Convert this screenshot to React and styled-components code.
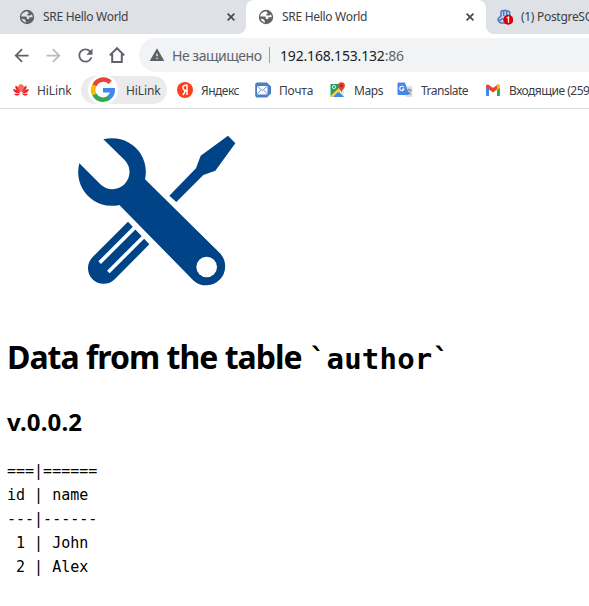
import React from "react";
import styled, { createGlobalStyle } from "styled-components";
import { MdArrowBack, MdArrowForward, MdRefresh, MdWarning } from "react-icons/md";

const Global = createGlobalStyle`
  html, body { margin: 0; padding: 0; background: #fff; overflow: hidden; }
  * { box-sizing: border-box; }
`;

const Window = styled.div`
  width: 589px;
  height: 606px;
  overflow: hidden;
  background: #fff;
  font-family: "Noto Sans", "Open Sans", sans-serif;
  font-size: 12px;
  color: #3c4043;
`;

const TabStrip = styled.div`
  display: flex;
  height: 34px;
  background: linear-gradient(#dee1e6 0 17px, #fff 17px);
`;

const Tab = styled.div`
  flex: none;
  display: flex;
  align-items: center;
  width: ${(p) => p.$width}px;
  padding-left: ${(p) => p.$inset}px;
  background: ${(p) => (p.$active ? "#fff" : "#dee1e6")};
  border-radius: ${(p) => p.$radius};
  overflow: hidden;
`;

const TabTitle = styled.span`
  flex: 1;
  margin-left: 8px;
  white-space: nowrap;
  line-height: 16px;
  letter-spacing: ${(p) => p.$spacing || 0}px;
`;

const CloseIcon = styled.svg`
  flex: none;
  width: 8px;
  height: 8px;
  margin-right: ${(p) => p.$end}px;
`;

const Toolbar = styled.div`
  display: flex;
  align-items: center;
  height: 42px;
  padding-left: 10px;
  color: #5f6368;
`;

const NavButton = styled.span`
  display: flex;
  align-items: center;
  justify-content: center;
  width: 22px;
  height: 22px;
  margin-right: 10px;
  color: ${(p) => (p.$disabled ? "#babcbe" : "#5f6368")};
`;

const Omnibox = styled.div`
  flex: 1;
  display: flex;
  align-items: center;
  height: 34px;
  margin-left: 1px;
  padding-left: 10px;
  border-radius: 17px 0 0 17px;
  background: #f1f3f4;
  font-size: 14px;
  white-space: nowrap;
`;

const Security = styled.span`
  width: 89px;
  margin-left: 7px;
  letter-spacing: -0.48px;
`;

const Divider = styled.span`
  width: 1px;
  height: 16px;
  margin: 0 10px 0 8px;
  background: #9aa0a6;
`;

const Address = styled.span`
  color: #202124;
  letter-spacing: -0.18px;
`;

const Port = styled.span`
  color: #5f6368;
`;

const Bookmarks = styled.div`
  display: flex;
  align-items: center;
  height: 33px;
  padding: 0 0 4px 13px;
  border-bottom: 1px solid #dadce0;
`;

const Bookmark = styled.span`
  flex: none;
  display: flex;
  align-items: center;
  width: ${(p) => p.$width}px;
  white-space: nowrap;
  letter-spacing: ${(p) => p.$spacing || 0}px;
  gap: 8px;
`;

const ActiveBookmark = styled(Bookmark)`
  height: 28px;
  margin-right: 10px;
  padding-left: 7px;
  border-radius: 14px;
  background: #ebebeb;
`;

const Favicon = styled.svg`
  flex: none;
  width: ${(p) => p.$size || 16}px;
  height: ${(p) => p.$size || 16}px;
`;

const Page = styled.main`
  padding: 11px 7px;
  color: #000;
`;

const ToolsImage = styled.svg`
  display: block;
  width: 200px;
  height: 180px;
  margin-left: 53px;
`;

const Heading = styled.h1`
  margin: 35px 0 0;
  height: 44px;
  line-height: 44px;
  font-size: 32px;
  font-weight: 700;
  letter-spacing: -1px;
  white-space: nowrap;
`;

const Code = styled.code`
  font-family: "DejaVu Sans Mono", monospace;
  font-size: 29px;
  letter-spacing: 0.2px;
`;

const Version = styled.h2`
  margin: 27px 0 0;
  height: 32px;
  line-height: 32px;
  font-size: 24px;
  font-weight: 700;
  letter-spacing: 0.15px;
`;

const Output = styled.pre`
  margin: 21px 0 0;
  font-family: "DejaVu Sans Mono", monospace;
  font-size: 15px;
  line-height: 24px;
`;

const Globe = ({ land }) => (
  <Favicon viewBox="0 0 16 16">
    <circle cx="8" cy="8" r="7.2" fill="#5f6368" />
    <path
      d="M8.700 2.600C5 2.200 2.500 4.700 2.300 7.600H6.200c1.200 0 1.700.7 1.700 1.500v1h2.300V8.300h3.500c0-1-.3-2-.8-2.800l-1.700.9H8.400V4.700h1.500z"
      fill={land}
    />
    <path d="M2.700 9.600l3.400.9 1 3.200C4.900 13.300 3.200 11.700 2.700 9.600z" fill={land} />
  </Favicon>
);

const Close = ({ end }) => (
  <CloseIcon $end={end} viewBox="0 0 8 8">
    <path d="M.6.6l6.800 6.800M7.400.6L.6 7.400" stroke="#45494d" strokeWidth="1.700" />
  </CloseIcon>
);

const Home = () => (
  <svg width="18" height="18" viewBox="0 0 18 18">
    <path d="M1.800 9.400L9 2.200l7.200 7.200M4.200 8v8.100h9.600V8" fill="none" stroke="#5f6368" strokeWidth="2" />
  </svg>
);

const Paw = () => (
  <Favicon viewBox="0 0 16 16">
    <g fill="#c9d8ee" stroke="#4878bd" strokeWidth="1.500">
      <path d="M4 8V3.200C4 1 6.700 1 6.700 3v4V3c0-2.500 3-2.500 3 0v4V3.500c0-2 3-2 3 .3V9L9 14H3.500L1.500 12z" />
      <path d="M4.500 6.500L1.300 9.500c-.8 1 .2 2.500 1.400 1.800L6 9.500" />
    </g>
    <circle cx="11.200" cy="10.800" r="5" fill="#d90000" />
    <path d="M9.700 9l1.800-1v5.800" stroke="#fff" strokeWidth="1.300" fill="none" />
  </Favicon>
);

const Flower = () => (
  <Favicon viewBox="0 0 16 16">
    <g fill="#f2222a">
      <path d="M7.200 10.500C3 8 1.500 5.800 2.800 3.500 5.300 4.700 7 7.500 7.200 10.500zM8.800 10.500C13 8 14.500 5.800 13.200 3.500 10.700 4.700 9 7.500 8.800 10.500z" />
      <path d="M7 11.200C3 11.600.2 10 .2 7 3.200 7.200 5.800 9 7 11.200zM9 11.200c4 .4 6.800-1.200 6.800-4.200C12.800 7.200 10.200 9 9 11.200z" />
      <path d="M7 11.700C5 14.200 2.500 14.200 1 11.700zM9 11.700c2 2.500 4.500 2.500 6 0z" />
    </g>
    <path d="M7.800 10C4.500 7 4 3.800 7.200 2.300H8.800C12 3.800 11.500 7 8.200 10z" fill="#f4705c" />
  </Favicon>
);

const Google = () => (
  <Favicon $size={30} viewBox="0 0 30 30">
    <circle cx="15" cy="15" r="15" fill="#fff" />
    <g fill="none" strokeWidth="4.600">
      <path d="M22.200 7.300A9.700 9.700 0 0 0 6.400 10.500" stroke="#ea4335" />
      <path d="M6.400 10.300A9.700 9.700 0 0 0 6.400 19.700" stroke="#fbbc05" />
      <path d="M6.400 19.500A9.700 9.700 0 0 0 21.500 22.200" stroke="#34a853" />
      <path d="M15 15.200h9.700A9.700 9.700 0 0 1 21.200 22.500" stroke="#4285f4" />
    </g>
  </Favicon>
);

const Yandex = () => (
  <Favicon viewBox="0 0 16 16">
    <circle cx="8" cy="8" r="8" fill="#fc3f1d" />
    <path d="M10 13V3.200H8.800C6.800 3.200 5.900 4.300 5.900 5.700c0 1.400.9 2.200 2.600 3L6 13M8.500 8.500H10" fill="none" stroke="#fff" strokeWidth="1.500" />
  </Favicon>
);

const Mail = () => (
  <Favicon viewBox="0 0 16 16">
    <path d="M1.500.5H12L16 4.500v7l-4 4H1.500L.2 14V2z" fill="#4a7fc7" />
    <path d="M2 4h10.500v8.500H2z" fill="#fff" />
    <path d="M2 4l5.200 4.500L12.500 4M2 12.500l3.700-4.500M12.500 12.500L8.800 8" fill="none" stroke="#6f9ad6" />
  </Favicon>
);

const Maps = () => (
  <Favicon viewBox="0 0 16 16">
    <path d="M.5 2h13.500v13H.5z" fill="#1fa463" />
    <path d="M.5 14L12 3l2 2L4.500 15h-4z" fill="#ffd04b" />
    <path d="M3 15l5-5 5 5z" fill="#4285f4" />
    <path d="M9 10l5-5v10z" fill="#e4e8ed" />
    <circle cx="4" cy="5" r="1.600" fill="none" stroke="#d7f0e2" />
    <path d="M11.500.3A3.400 3.400 0 0 0 8.100 3.700c0 2.500 2.800 3.600 3.400 7 .6-3.400 3.400-4.500 3.400-7A3.400 3.400 0 0 0 11.500.3z" fill="#e34133" />
    <circle cx="11.500" cy="3.700" r="1.200" fill="#852b24" />
  </Favicon>
);

const Translate = () => (
  <Favicon viewBox="0 0 16 16">
    <path d="M6 4h8.500a1 1 0 0 1 1 1v10H9z" fill="#dfe1e4" />
    <path d="M1.500.5H8L12 13H1.500a1 1 0 0 1-1-1V1.500a1 1 0 0 1 1-1z" fill="#4787ed" />
    <path d="M6.800 5.300A2.200 2.200 0 1 0 7 7H5.100" fill="none" stroke="#fff" strokeWidth="1.100" />
    <path d="M9.500 8h5M12 6.500V8m2 0c-.5 2-2 3.500-3.500 4.500M10.500 9c.7 1.500 2 2.800 3.500 3.500" stroke="#6c7f8c" fill="none" />
  </Favicon>
);

const Gmail = () => (
  <Favicon viewBox="0 0 16 16">
    <path d="M1 4.500l3 2.200V14H2a1 1 0 0 1-1-1z" fill="#4285f4" />
    <path d="M15 4.500l-3 2.200V14h2a1 1 0 0 0 1-1z" fill="#34a853" />
    <path d="M1 4.500C1 2.500 2.800 2 4 3l4 3 4-3c1.200-1 3-.5 3 1.500v.7l-7 5.300-7-5.300z" fill="#ea4335" />
    <path d="M12 3c1.200-1 3-.5 3 1.500V6l-3 2z" fill="#fbbc04" />
  </Favicon>
);

const Tools = () => (
  <ToolsImage viewBox="0 0 600 540" fill="#004386">
    <path d="M130 58A101 101 0 0 1 255 178L480 400A57 57 0 0 1 401 482L178 255A101 101 0 0 1 58 130L121 193A51 51 0 0 0 193 119Z" />
    <circle cx="440" cy="441" r="31" fill="#fff" />
    <path d="M328 227L408 145L422 107L504 47L526 70L466 152L430 165L349 246Z" />
    <path d="M204 305L268 373L164 478A47 47 0 0 1 98 411Z" />
    <path d="M224 323L119 428M250 351L145 456" stroke="#fff" strokeWidth="11" />
  </ToolsImage>
);

const rows = ["===|======", "id | name", "---|------", " 1 | John", " 2 | Alex"];

export default function App() {
  return (
    <Window>
      <Global />
      <TabStrip>
        <Tab $width={246} $inset={19} $radius="0 0 8px 0">
          <Globe land="#dee1e6" />
          <TabTitle $spacing={-0.3}>SRE Hello World</TabTitle>
          <Close end={11} />
        </Tab>
        <Tab $active $width={240} $inset={12} $radius="8px 8px 0 0">
          <Globe land="#fff" />
          <TabTitle $spacing={-0.3}>SRE Hello World</TabTitle>
          <Close end={12} />
        </Tab>
        <Tab $width={103} $inset={11} $radius="0 0 0 8px">
          <Paw />
          <TabTitle $spacing={-0.3}>(1) PostgreSQL</TabTitle>
        </Tab>
      </TabStrip>
      <Toolbar>
        <NavButton><MdArrowBack size={21} /></NavButton>
        <NavButton $disabled><MdArrowForward size={21} /></NavButton>
        <NavButton><MdRefresh size={21} /></NavButton>
        <NavButton><Home /></NavButton>
        <Omnibox>
          <MdWarning size={16} />
          <Security>Не защищено</Security>
          <Divider />
          <Address>192.168.153.132<Port>:86</Port></Address>
        </Omnibox>
      </Toolbar>
      <Bookmarks>
        <Bookmark $width={68} $spacing={-0.1}><Flower />HiLink</Bookmark>
        <ActiveBookmark $width={86} $spacing={-0.1}><Google />HiLink</ActiveBookmark>
        <Bookmark $width={78} $spacing={-0.5}><Yandex />Яндекс</Bookmark>
        <Bookmark $width={75} $spacing={-0.2}><Mail />Почта</Bookmark>
        <Bookmark $width={67} $spacing={-0.4}><Maps />Maps</Bookmark>
        <Bookmark $width={88} $spacing={-0.5}><Translate />Translate</Bookmark>
        <Bookmark $width={104} $spacing={-0.5}><Gmail />Входящие (259)</Bookmark>
      </Bookmarks>
      <Page>
        <Tools />
        <Heading>Data from the table <Code>`author`</Code></Heading>
        <Version>v.0.0.2</Version>
        <Output>{rows.join("\n")}</Output>
      </Page>
    </Window>
  );
}
